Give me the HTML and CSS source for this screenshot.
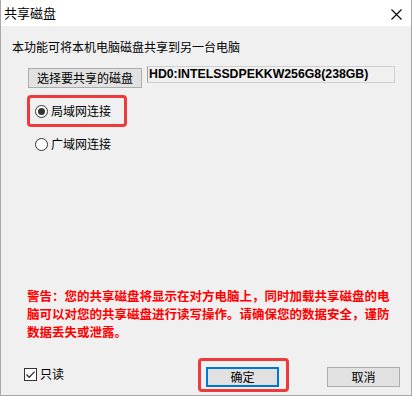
FILE: index.html
```html
<!DOCTYPE html>
<html lang="zh-CN">
<head>
<meta charset="utf-8">
<title>共享磁盘</title>
<link rel="stylesheet" href="styles.css">
</head>
<body>
<div class="window">
  <div class="titlebar">
    <span class="title">共享磁盘</span>
    <svg class="close" width="11" height="11" viewBox="0 0 11 11"><path d="M0.5 0.5 L10.5 10.5 M10.5 0.5 L0.5 10.5" stroke="#000" stroke-width="1.1" fill="none"/></svg>
  </div>
  <div class="content">
    <p class="desc">本功能可将本机电脑磁盘共享到另一台电脑</p>
    <div class="select-row">
      <div class="btn btn-select">选择要共享的磁盘</div>
      <div class="disk-box">HD0:INTELSSDPEKKW256G8(238GB)</div>
    </div>
    <div class="hl hl-radio">
      <div class="radio-row">
        <span class="radio checked"></span><span class="radio-text">局域网连接</span>
      </div>
    </div>
    <div class="radio-row radio-plain">
      <span class="radio"></span><span class="radio-text">广域网连接</span>
    </div>
    <p class="warning">警告：您的共享磁盘将显示在对方电脑上，同时加载共享磁盘的电脑可以对您的共享磁盘进行读写操作。请确保您的数据安全，谨防数据丢失或泄露。</p>
    <div class="bottom">
      <div class="check-wrap">
        <span class="checkbox"><svg width="11" height="11" viewBox="0 0 11 11"><path d="M1.5 5.5 L4.2 8.3 L9.6 2.6" stroke="#333" stroke-width="1.3" fill="none"/></svg></span>
        <span class="check-text">只读</span>
      </div>
      <div class="hl hl-ok">
        <div class="btn btn-ok">确定</div>
      </div>
      <div class="btn btn-cancel">取消</div>
    </div>
  </div>
</div>
</body>
</html>
```
FILE: styles.css
```css
html, body {
  margin: 0;
  padding: 0;
  background: #f0f0f0;
}
body {
  font-family: "Noto Sans CJK SC", "Noto Sans", sans-serif;
  font-size: 12px;
  line-height: 16px;
  color: #000;
}
.window {
  width: 412px;
  height: 396px;
  box-sizing: border-box;
  border: 1px solid #a8a8a8;
  border-top: none;
  background: #f0f0f0;
  display: flex;
  flex-direction: column;
}
.titlebar {
  height: 26px;
  flex: none;
  background: #fff;
  display: flex;
  align-items: center;
  justify-content: space-between;
  padding: 0 9px 0 3px;
}
.title {
  font-size: 13px;
  line-height: 16px;
}
.close {
  display: block;
  margin-top: 2px;
}
.content {
  display: flex;
  flex-direction: column;
  align-items: flex-start;
  padding-top: 13px;
}
.desc {
  margin: 0 0 0 11px;
  line-height: 16px;
}
.select-row {
  display: flex;
  align-items: flex-start;
  margin-top: 11px;
  margin-left: 27px;
}
.btn {
  box-sizing: border-box;
  background: #e1e1e1;
  border: 1px solid #adadad;
  display: flex;
  align-items: center;
  justify-content: center;
  line-height: 16px;
}
.btn-select {
  width: 114px;
  height: 20px;
  margin-top: 2px;
}
.disk-box {
  box-sizing: border-box;
  width: 248px;
  height: 17px;
  margin-left: 5px;
  border: 1px solid #d0d0d0;
  border-left-color: #a0a0a0;
  padding-left: 1px;
  font-family: "Liberation Sans", Arial, sans-serif;
  font-weight: bold;
  font-size: 12.3px;
  line-height: 15px;
  color: #000;
}
.hl {
  border: 3px solid #ef3a3c;
  border-radius: 4px;
}
.hl-radio {
  margin-top: 7px;
  margin-left: 26px;
  padding: 0 13px 0 5px;
  height: 26px;
  display: flex;
  align-items: center;
}
.radio-row {
  display: flex;
  align-items: center;
  height: 16px;
}
.radio-plain {
  margin-top: 9px;
  margin-left: 34px;
}
.radio {
  box-sizing: border-box;
  width: 13px;
  height: 13px;
  border: 1px solid #333;
  border-radius: 50%;
  background: #fff;
  display: flex;
  align-items: center;
  justify-content: center;
  margin-right: 3px;
}
.radio.checked::after {
  content: "";
  width: 7px;
  height: 7px;
  border-radius: 50%;
  background: #333;
}
.warning {
  margin: 135px 0 0 26px;
  width: 370px;
  color: #ff0000;
  font-weight: bold;
  font-size: 12.5px;
  line-height: 18px;
}
.bottom {
  margin-top: 17px;
  width: 100%;
  height: 34px;
  display: flex;
  align-items: flex-start;
}
.check-wrap {
  flex: 1;
  display: flex;
  align-items: center;
  margin-top: 9px;
  margin-left: 23px;
  height: 14px;
}
.checkbox {
  box-sizing: border-box;
  width: 13px;
  height: 13px;
  border: 1px solid #333;
  background: #fff;
  display: flex;
  align-items: center;
  justify-content: center;
  margin-right: 3px;
}
.checkbox svg {
  display: block;
}
.hl-ok {
  box-sizing: border-box;
  width: 91px;
  height: 34px;
  padding: 6px 7px 2px 5px;
}
.btn-ok {
  width: 73px;
  height: 20px;
  border: 2px solid #0078d7;
}
.btn-cancel {
  width: 73px;
  height: 20px;
  margin-top: 9px;
  margin-left: 38px;
  margin-right: 11px;
}
```
